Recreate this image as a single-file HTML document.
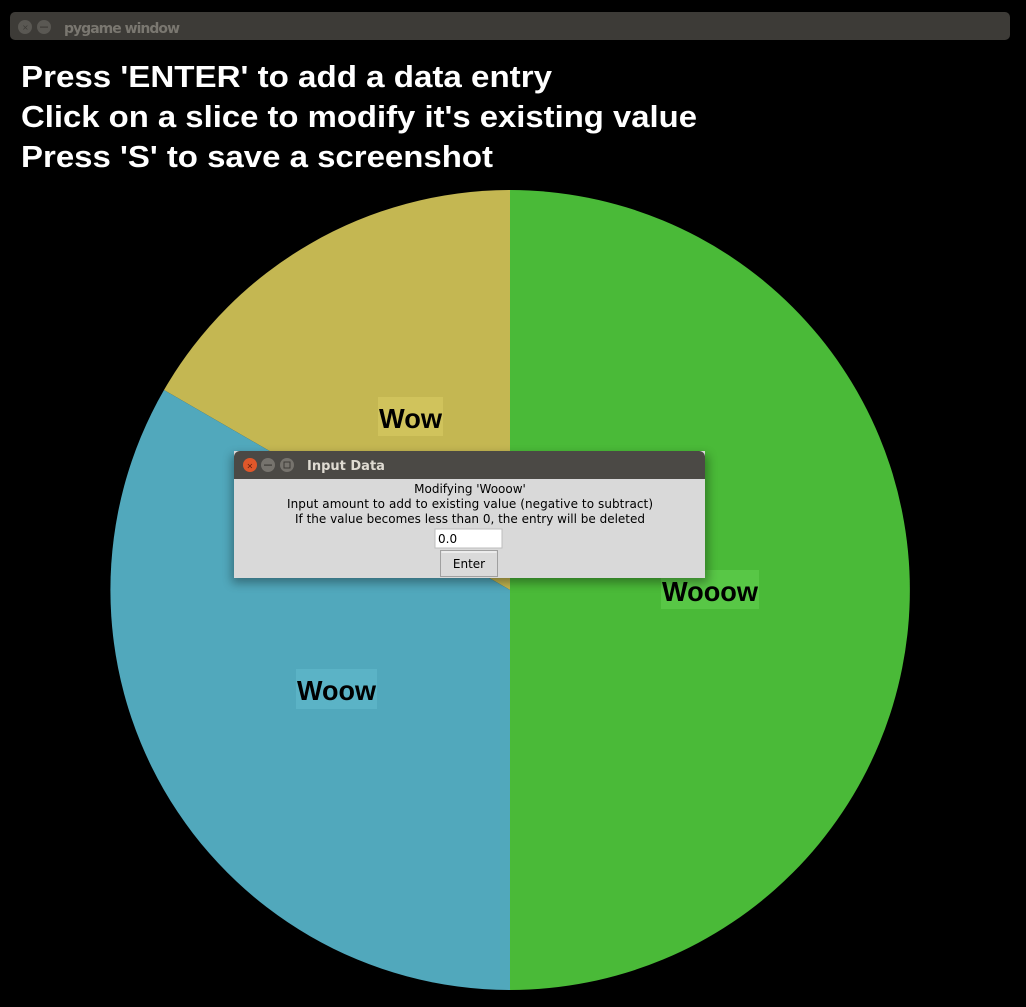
<!DOCTYPE html>
<html><head><meta charset="utf-8"><style>
html,body{margin:0;padding:0;background:#000;width:1026px;height:1007px;overflow:hidden}
</style></head><body>
<svg width="1026" height="1007" viewBox="0 0 1026 1007" xmlns="http://www.w3.org/2000/svg" style="position:absolute;left:0;top:0">
<defs><filter id="b" x="-10%" y="-20%" width="120%" height="140%"><feGaussianBlur stdDeviation="5"/></filter></defs>
<rect width="1026" height="1007" fill="#000"/>
<rect x="10" y="12" width="1000" height="28" rx="5" fill="#3d3b37"/>
<circle cx="25" cy="27" r="7" fill="#5a5853"/><circle cx="44" cy="27" r="7" fill="#5a5853"/>
<text x="22" y="30" font-family="DejaVu Sans" font-size="8" fill="#3d3b37">×</text>
<rect x="40" y="26.5" width="8" height="1.2" fill="#3d3b37"/>
<text x="64" y="33" font-family="DejaVu Sans, sans-serif" font-weight="bold" font-size="14" fill="#7a7770" textLength="116">pygame window</text>
<g font-family="Liberation Sans, sans-serif" font-weight="bold" font-size="31" fill="#fff">
<text x="21" y="87" textLength="531" lengthAdjust="spacingAndGlyphs">Press 'ENTER' to add a data entry</text>
<text x="21" y="127" textLength="676" lengthAdjust="spacingAndGlyphs">Click on a slice to modify it's existing value</text>
<text x="21" y="167" textLength="472" lengthAdjust="spacingAndGlyphs">Press 'S' to save a screenshot</text>
</g>
<path d="M510 590 L510 190 A400 400 0 0 1 510 990 Z" fill="#4aba38"/>
<path d="M510 590 L510 190 A400 400 0 0 0 164 390 Z" fill="#c4b752"/>
<path d="M510 590 L164 390 A400 400 0 0 0 510 990 Z" fill="#51a8bc"/>
<g font-family="Liberation Sans, sans-serif" font-weight="bold" font-size="28" fill="#000">
<rect x="378" y="397" width="65" height="39" fill="#d0c35c"/>
<text x="379" y="428" textLength="63" lengthAdjust="spacingAndGlyphs">Wow</text>
<rect x="661" y="570" width="98" height="39" fill="#58c746"/>
<text x="662" y="601" textLength="96" lengthAdjust="spacingAndGlyphs">Wooow</text>
<rect x="296" y="669" width="81" height="40" fill="#5bb3c6"/>
<text x="297" y="700" textLength="79" lengthAdjust="spacingAndGlyphs">Woow</text>
</g>
<rect x="232" y="455" width="476" height="128" fill="#000" opacity="0.35" filter="url(#b)"/>
<rect x="234" y="451" width="471" height="127" fill="#d9d9d9"/>
<path d="M234 479 V457 a6 6 0 0 1 6 -6 H699 a6 6 0 0 1 6 6 V479 Z" fill="#4b4945"/>
<circle cx="250" cy="465" r="7" fill="#e0572a"/><circle cx="268" cy="465" r="7" fill="#76736d"/><circle cx="287" cy="465" r="7" fill="#76736d"/>
<text x="246.5" y="468.5" font-family="DejaVu Sans" font-size="8" fill="#5a1a0a">×</text>
<rect x="264" y="464.5" width="8" height="1.2" fill="#3d3b37"/>
<rect x="284" y="462" width="6" height="6" fill="none" stroke="#3d3b37" stroke-width="1"/>
<text x="307" y="470" font-family="DejaVu Sans, sans-serif" font-weight="bold" font-size="13" fill="#dfdbd2">Input Data</text>
<g font-family="DejaVu Sans, sans-serif" font-size="12" fill="#000" text-anchor="middle">
<text x="470" y="493">Modifying 'Wooow'</text>
<text x="470" y="508" textLength="366">Input amount to add to existing value (negative to subtract)</text>
<text x="470" y="523" textLength="350">If the value becomes less than 0, the entry will be deleted</text>
</g>
<rect x="435" y="529" width="67" height="19" fill="#fff" stroke="#bdbdbd"/>
<text x="438" y="543" font-family="DejaVu Sans, sans-serif" font-size="12" fill="#000">0.0</text>
<rect x="440.5" y="550.5" width="57" height="26" fill="#dadada" stroke="#a0a0a0"/>
<rect x="441.5" y="551.5" width="55" height="1" fill="#fff"/>
<text x="469" y="568" font-family="DejaVu Sans, sans-serif" font-size="12" fill="#000" text-anchor="middle">Enter</text>
</svg>
</body></html>
